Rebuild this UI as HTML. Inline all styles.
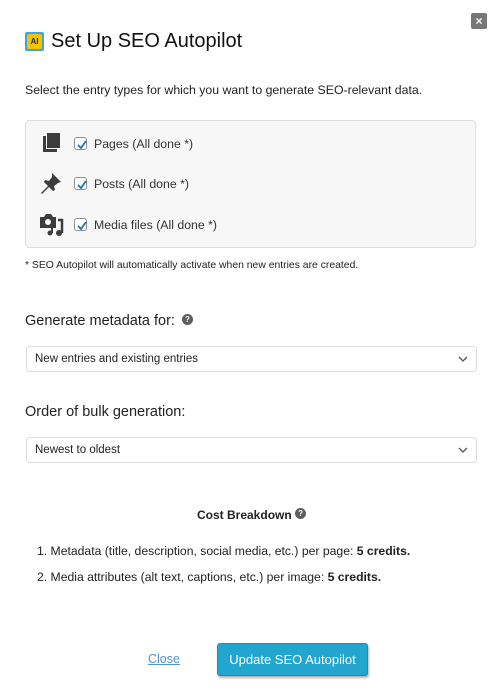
<!DOCTYPE html>
<html><head><meta charset="utf-8"><style>
*{margin:0;padding:0;box-sizing:border-box}
body{width:500px;height:699px;background:#fff;font-family:"Liberation Sans",sans-serif;color:#1e1e1e;position:relative;overflow:hidden}
.a{position:absolute;white-space:nowrap}
.box{position:absolute;left:25px;top:120px;width:451px;height:128px;background:#f7f7f7;border:1px solid #dedede;border-radius:4px}
.cb{position:absolute;left:74px;width:13px;height:13px;border:1px solid #8c8f94;border-radius:3px;background:#fff}
.cb svg{position:absolute;left:1px;top:1px}
.lbl{position:absolute;left:94px;font-size:12.3px;color:#333}
.sel{position:absolute;left:26px;width:451px;height:26px;border:1px solid #ddd;border-radius:4px;font-size:11.5px;padding:6px 0 0 8px;color:#222}
.sel svg{position:absolute;right:8px;top:9px}
.q{display:inline-block;width:11px;height:11px;border-radius:50%;background:#5d5d5d;color:#fff;font-size:8px;font-weight:bold;text-align:center;line-height:11px;vertical-align:top}
</style></head><body>
<div class="a" style="left:471px;top:13px;width:16px;height:16px;background:#777;border-radius:2px;color:#fff;font-size:12px;font-weight:bold;text-align:center;line-height:16px">×</div>
<div class="a" style="left:25px;top:32px;width:19px;height:19px;background:#3ea5e0;border-radius:2px"></div>
<div class="a" style="left:27px;top:34px;width:15px;height:15px;background:#f5c400;border-radius:2px;font-size:8px;font-weight:bold;color:#1b2a4a;text-align:center;line-height:15px">AI</div>
<div class="a" style="left:51px;top:30px;font-size:20px;color:#111">Set Up SEO Autopilot</div>
<div class="a" style="left:25px;top:83px;font-size:12.3px;color:#222">Select the entry types for which you want to generate SEO-relevant data.</div>
<div class="box"></div>
<svg class="a" style="left:42px;top:133px" width="20" height="20"><rect x="5" y="0" width="13" height="15" fill="#3c3c3c"/><path d="M1 3h3v13h11v3H1z" fill="#3c3c3c"/></svg>
<svg class="a" style="left:40px;top:172px" width="22" height="22"><path d="M12 1l9 9-3 1-4 3 1 4-2 1-4-4-7 7-1-1 7-7-4-4 1-2 4 1 3-4z" fill="#3c3c3c"/></svg>
<svg class="a" style="left:39px;top:212px" width="26" height="24"><path d="M1 5h4l2-3h5l2 3h3v11H1z" fill="#3c3c3c"/><circle cx="9" cy="10" r="3" fill="#f7f7f7"/><path d="M19 8h4v13" stroke="#3c3c3c" stroke-width="2.5" fill="none"/><circle cx="20" cy="21" r="3" fill="#3c3c3c"/><circle cx="11" cy="21" r="2.5" fill="#3c3c3c"/><path d="M13 14v7" stroke="#3c3c3c" stroke-width="2"/></svg>
<div class="cb" style="top:137px"><svg width="11" height="11"><path d="M2 6l3 3 5-7" stroke="#2271b1" stroke-width="1.8" fill="none"/></svg></div>
<div class="lbl" style="top:137px">Pages (All done *)</div>
<div class="cb" style="top:177px"><svg width="11" height="11"><path d="M2 6l3 3 5-7" stroke="#2271b1" stroke-width="1.8" fill="none"/></svg></div>
<div class="lbl" style="top:177px">Posts (All done *)</div>
<div class="cb" style="top:218px"><svg width="11" height="11"><path d="M2 6l3 3 5-7" stroke="#2271b1" stroke-width="1.8" fill="none"/></svg></div>
<div class="lbl" style="top:218px">Media files (All done *)</div>
<div class="a" style="left:25px;top:260px;font-size:10.4px;color:#222">* SEO Autopilot will automatically activate when new entries are created.</div>
<div class="a" style="left:25px;top:313px;font-size:14.5px;color:#222">Generate metadata for: <span class="q" style="margin-left:3px;margin-top:1px">?</span></div>
<div class="sel" style="top:346px">New entries and existing entries<svg width="10" height="7"><path d="M1 1l4 4 4-4" stroke="#555" stroke-width="1.3" fill="none"/></svg></div>
<div class="a" style="left:25px;top:404px;font-size:14.5px;color:#222">Order of bulk generation:</div>
<div class="sel" style="top:437px">Newest to oldest<svg width="10" height="7"><path d="M1 1l4 4 4-4" stroke="#555" stroke-width="1.3" fill="none"/></svg></div>
<div class="a" style="left:197px;top:508px;font-size:12px;font-weight:bold;color:#222">Cost Breakdown <span class="q">?</span></div>
<div class="a" style="left:37px;top:544px;font-size:12.2px;color:#222">1. Metadata (title, description, social media, etc.) per page: <b>5 credits.</b></div>
<div class="a" style="left:37px;top:570px;font-size:12.2px;color:#222">2. Media attributes (alt text, captions, etc.) per image: <b>5 credits.</b></div>
<div class="a" style="left:148px;top:652px;font-size:12.5px;color:#4f94d4;text-decoration:underline">Close</div>
<div class="a" style="left:217px;top:643px;width:151px;height:33px;background:#22a5cf;border:1px solid #1a8db4;border-radius:3px;box-shadow:1px 2px 2px rgba(0,0,0,.3);color:#fff;font-size:13px;text-align:center;line-height:31px">Update SEO Autopilot</div>
</body></html>
